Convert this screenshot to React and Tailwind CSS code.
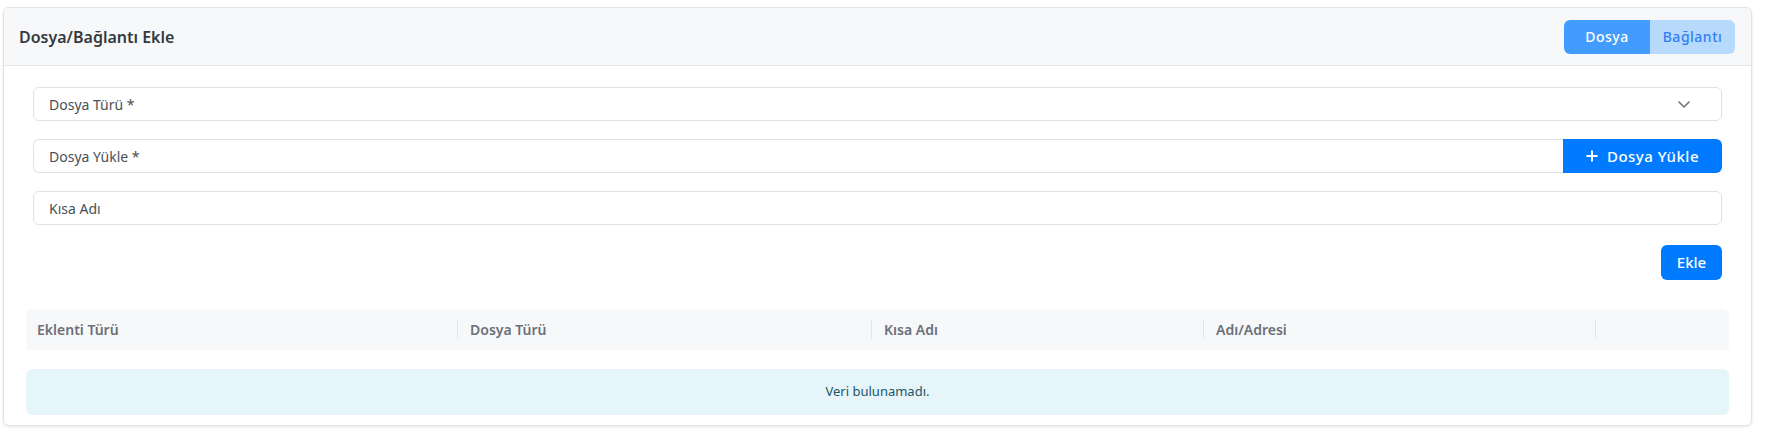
import React, { useState } from 'react';

const columns = [
  { label: 'Eklenti Türü', width: 'w-[431px]' },
  { label: 'Dosya Türü', width: 'w-[414px]' },
  { label: 'Kısa Adı', width: 'w-[332px]' },
  { label: 'Adı/Adresi', width: 'w-[392px]' },
  { label: '', width: 'w-[134px]' },
];

function App() {
  const [mode, setMode] = useState('dosya');

  return (
    <div className="min-h-[447px] bg-white pt-[7px] pl-[3px] font-['Noto_Sans','Open_Sans',sans-serif]">
      <div className="w-[1749px] overflow-hidden rounded-md border border-[#e1e3e6] bg-white shadow-[0_1px_3px_rgba(0,0,0,0.1)]">
        <div className="flex h-[58px] items-center justify-between border-b border-[#e3e5e8] bg-[#f7f8fa] pl-[15px] pr-[16px]">
          <h2 className="text-[16px] font-semibold text-[#343a40]">Dosya/Bağlantı Ekle</h2>
          <div className="flex h-[34px] overflow-hidden rounded-md text-[14px] font-medium tracking-[0.5px]">
            <button
              onClick={() => setMode('dosya')}
              className={mode === 'dosya' ? 'w-[86px] bg-[#419cfd] text-white' : 'w-[86px] bg-[#b7d9fc] text-[#2f80f2]'}
            >
              Dosya
            </button>
            <button
              onClick={() => setMode('baglanti')}
              className={mode === 'baglanti' ? 'w-[85px] bg-[#419cfd] text-white' : 'w-[85px] bg-[#b7d9fc] text-[#2f80f2]'}
            >
              Bağlantı
            </button>
          </div>
        </div>

        <div className="px-[22px] pt-[21px] pb-[10px]">
          <div className="px-[7px]">
            <div className="mb-[18px] flex h-[34px] items-center justify-between rounded-md border border-[#dee2e6] pl-[15px] pr-[31px] text-[14px] text-[#495057]">
              <span>Dosya Türü *</span>
              <svg width="12" height="7" viewBox="0 0 12 7" fill="none">
                <path d="M1 1l5 5 5-5" stroke="#6c757d" strokeWidth="1.6" strokeLinecap="round" strokeLinejoin="round" />
              </svg>
            </div>

            <div className="mb-[18px] flex h-[34px]">
              <div className="flex flex-1 items-center rounded-l-md border border-r-0 border-[#dee2e6] pl-[15px] text-[14px] text-[#495057]">
                Dosya Yükle *
              </div>
              <button className="flex w-[159px] items-center justify-center gap-[9px] rounded-r-md bg-[#007bff] text-[15px] font-medium tracking-[0.5px] text-white">
                <svg width="12" height="12" viewBox="0 0 12 12" fill="none">
                  <path d="M6 0.5v11M0.5 6h11" stroke="white" strokeWidth="2" />
                </svg>
                Dosya Yükle
              </button>
            </div>

            <div className="flex h-[34px] items-center rounded-md border border-[#dee2e6] pl-[15px] text-[14px] text-[#495057]">
              Kısa Adı
            </div>

            <div className="mt-[20px] flex justify-end">
              <button className="h-[35px] w-[61px] rounded-md bg-[#007bff] text-[15px] font-medium text-white">Ekle</button>
            </div>
          </div>

          <div className="mt-[29px] flex h-[41px] rounded-t-md bg-[#f7f8fa] text-[14px] font-semibold text-[#6b7079]">
            {columns.map((col, i) => (
              <div key={i} className={`flex items-center ${col.width}`}>
                {i > 0 && <span className="h-[19px] w-px bg-[#e3e5e8]" />}
                <span className={i > 0 ? 'ml-3' : 'ml-[11px]'}>{col.label}</span>
              </div>
            ))}
          </div>

          <div className="mt-[19px] flex h-[46px] items-center justify-center rounded-md bg-[#e5f5fa] text-[13px] text-[#1c5564]">
            Veri bulunamadı.
          </div>
        </div>
      </div>
    </div>
  );
}

export default App;
